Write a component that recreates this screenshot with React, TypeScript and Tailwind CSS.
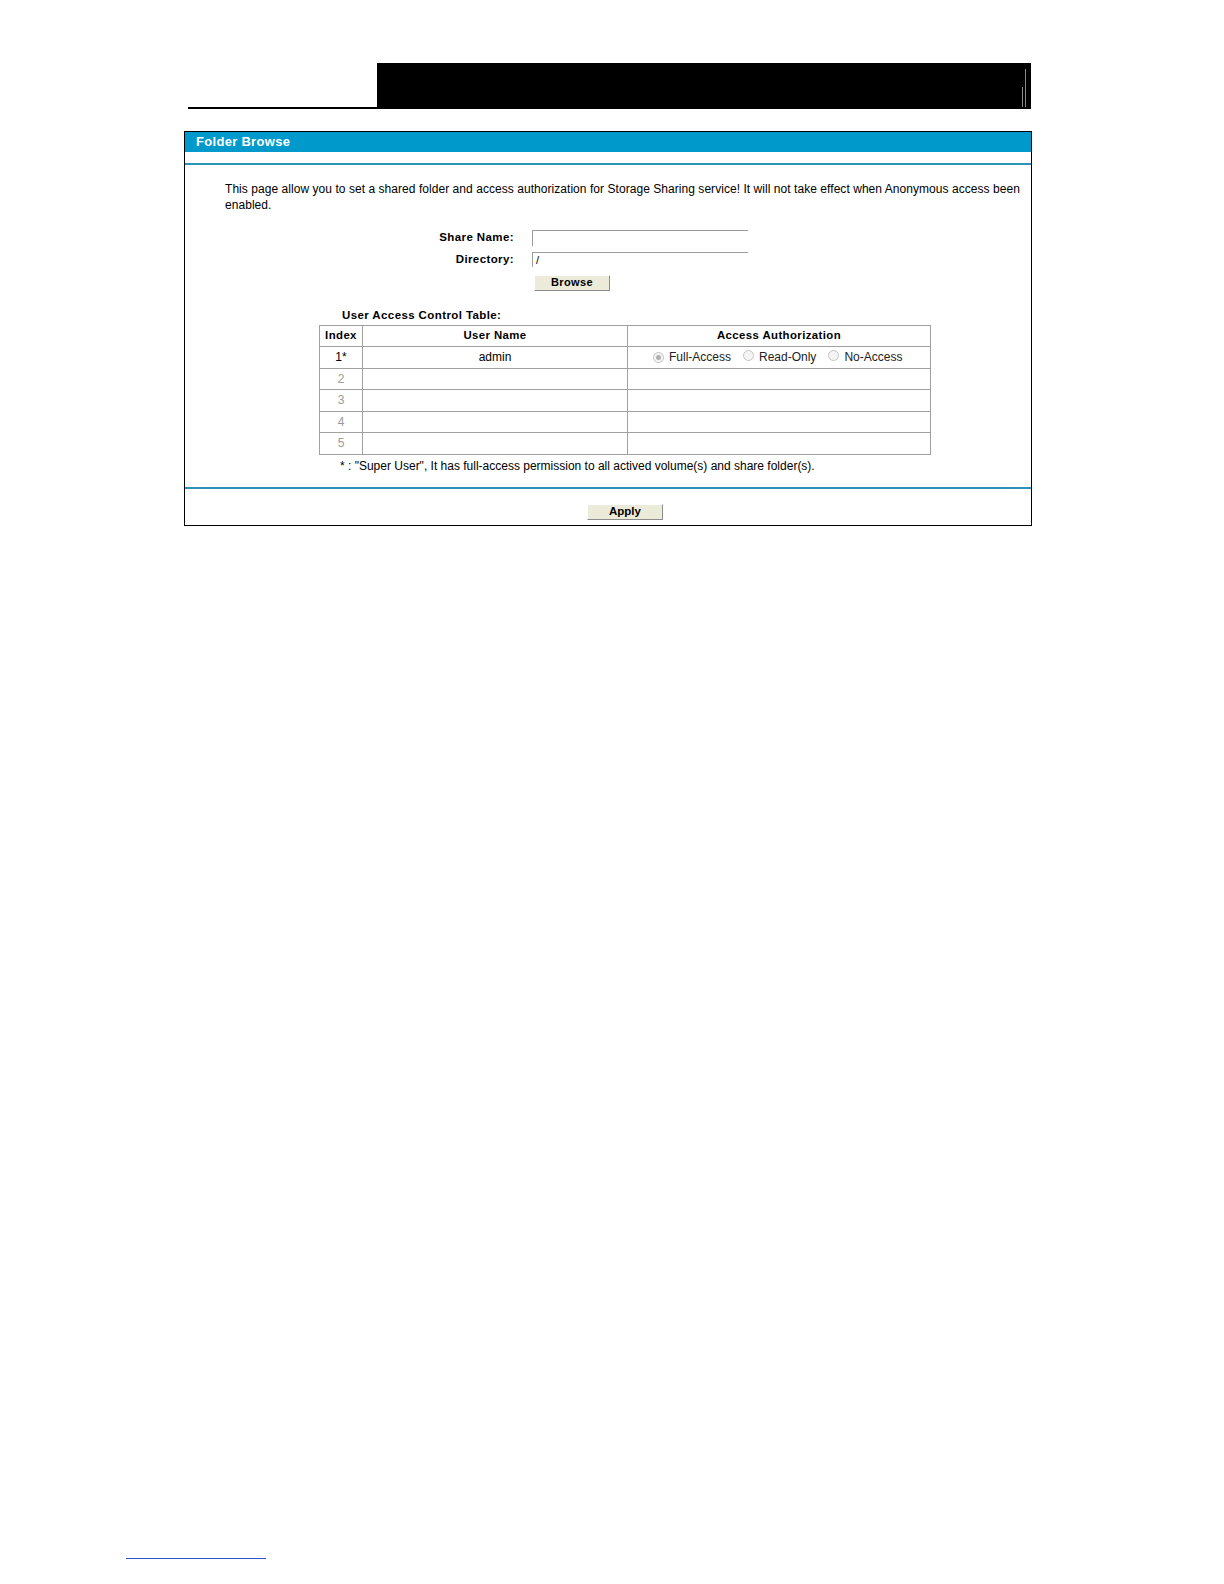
import React from "react";

const F = { fontFamily: '"Liberation Sans", Arial, sans-serif' };

function Radio({ checked }: { checked?: boolean }) {
  return (
    <span className="inline-flex h-[11px] w-[11px] items-center justify-center rounded-full border border-[#c4c4c4] bg-[#f4f4f4]">
      {checked ? <span className="h-[5px] w-[5px] rounded-full bg-[#b0b0b0]" /> : null}
    </span>
  );
}

export default function App() {
  const rows = [2, 3, 4, 5];
  return (
    <div className="relative flex h-[1584px] w-[1224px] flex-col bg-white text-black" style={F}>
      {/* header */}
      <div className="mt-[63px] flex items-end pl-[188px]">
        <div className="h-[2px] w-[189px] bg-black" />
        <div className="relative h-[46px] w-[654px] bg-black">
          <div className="absolute right-[5px] top-[6px] h-[38px] w-[1px] bg-[#8a8a8a]" />
          <div className="absolute right-[8px] top-[24px] h-[20px] w-[1px] bg-[#8a8a8a]" />
        </div>
      </div>

      {/* panel */}
      <div className="ml-[184px] mt-[22px] w-[848px] border border-black">
        <div className="flex h-[20px] items-center bg-[#0099cc] pl-[11px] text-[13px] font-bold tracking-[0.3px] text-white">
          Folder Browse
        </div>
        <div className="h-[13px] border-b-2 border-[#2b93b7]" />

        <div className="pl-[40px] pr-[10px] pt-[16px] text-[12px] leading-[16px] tracking-[0.05px]">
          This page allow you to set a shared folder and access authorization for Storage Sharing service! It will not take effect when Anonymous access been enabled.
        </div>

        <div className="mt-[16px] flex items-center">
          <div className="w-[329px] text-right text-[11.5px] font-bold tracking-[0.4px]">Share Name:</div>
          <div className="ml-[18px] h-[16px] w-[216px] border-l border-t border-[#9c9c9c]" />
        </div>
        <div className="mt-[5px] flex items-center">
          <div className="w-[329px] text-right text-[11.5px] font-bold tracking-[0.4px]">Directory:</div>
          <div className="ml-[18px] flex h-[15px] w-[216px] items-center border-l border-t border-[#9c9c9c] pl-[3px] text-[11px]">/</div>
        </div>
        <div className="ml-[349px] mt-[6px] flex h-[16px] w-[76px] items-center justify-center border border-b-[#8c8c8c] border-l-white border-r-[#8c8c8c] border-t-white bg-[#ecead9] text-[11px] font-bold tracking-[0.4px]">
          Browse
        </div>

        <div className="ml-[157px] mt-[17px] text-[11.5px] font-bold leading-[14px] tracking-[0.4px]">User Access Control Table:</div>
        <table className="ml-[134px] mt-[3px] w-[612px] border-collapse text-[12px]">
          <thead>
            <tr className="h-[21px]">
              <th className="w-[43px] border border-[#a0a0a0] p-0 text-center text-[11.4px] font-bold tracking-[0.4px]">Index</th>
              <th className="w-[265px] border border-[#a0a0a0] p-0 text-center text-[11.4px] font-bold tracking-[0.4px]">User Name</th>
              <th className="border border-[#a0a0a0] p-0 text-center text-[11.4px] font-bold tracking-[0.4px]">Access Authorization</th>
            </tr>
          </thead>
          <tbody>
            <tr className="h-[22px]">
              <td className="border border-[#a0a0a0] p-0 text-center">1*</td>
              <td className="border border-[#a0a0a0] p-0 text-center">admin</td>
              <td className="border border-[#a0a0a0] p-0">
                <div className="flex items-center pl-[25px] text-[#222]">
                  <Radio checked />
                  <span className="ml-[5px]">Full-Access</span>
                  <span className="ml-[12px]"><Radio /></span>
                  <span className="ml-[5px]">Read-Only</span>
                  <span className="ml-[12px]"><Radio /></span>
                  <span className="ml-[5px]">No-Access</span>
                </div>
              </td>
            </tr>
            {rows.map((r) => (
              <tr key={r} className="h-[21.5px]">
                <td className="border border-[#a0a0a0] p-0 text-center text-[#9a9a9a]">{r}</td>
                <td className="border border-[#a0a0a0] p-0" />
                <td className="border border-[#a0a0a0] p-0" />
              </tr>
            ))}
          </tbody>
        </table>
        <div className="ml-[155px] mt-[4px] text-[12px] leading-[14px]">
          * : "Super User", It has full-access permission to all actived volume(s) and share folder(s).
        </div>
        <div className="mt-[14px] h-[2px] bg-[#2b93b7]" />
        <div className="ml-[402px] mt-[15px] mb-[5px] flex h-[16px] w-[76px] items-center justify-center border border-b-[#8c8c8c] border-l-white border-r-[#8c8c8c] border-t-white bg-[#ecead9] text-[11.5px] font-bold">
          Apply
        </div>
      </div>

      {/* footer link line */}
      <div className="mt-auto mb-[25px] ml-[126px] h-[1px] w-[140px] bg-[#3355cc]" />
    </div>
  );
}
